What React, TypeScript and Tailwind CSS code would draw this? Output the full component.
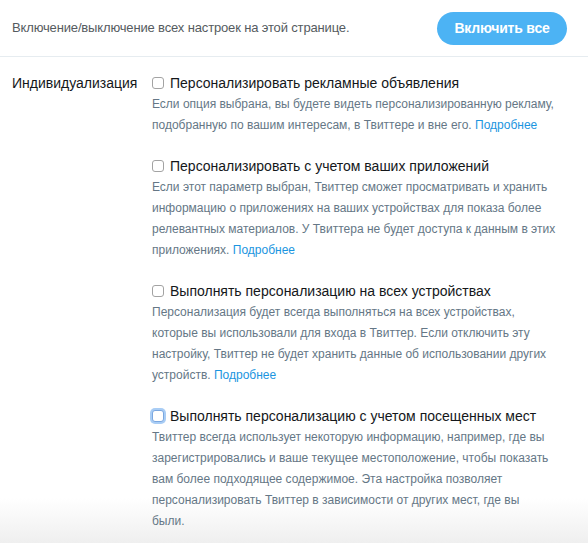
import React from "react";

const sections = [
  {
    title: "Персонализировать рекламные объявления",
    text: "Если опция выбрана, вы будете видеть персонализированную рекламу, подобранную по вашим интересам, в Твиттере и вне его.",
    focused: false,
  },
  {
    title: "Персонализировать с учетом ваших приложений",
    text: "Если этот параметр выбран, Твиттер сможет просматривать и хранить информацию о приложениях на ваших устройствах для показа более релевантных материалов. У Твиттера не будет доступа к данным в этих приложениях.",
    focused: false,
  },
  {
    title: "Выполнять персонализацию на всех устройствах",
    text: "Персонализация будет всегда выполняться на всех устройствах, которые вы использовали для входа в Твиттер. Если отключить эту настройку, Твиттер не будет хранить данные об использовании других устройств.",
    focused: false,
  },
  {
    title: "Выполнять персонализацию с учетом посещенных мест",
    text: "Твиттер всегда использует некоторую информацию, например, где вы зарегистрировались и ваше текущее местоположение, чтобы показать вам более подходящее содержимое. Эта настройка позволяет персонализировать Твиттер в зависимости от других мест, где вы",
    tail: "были.",
    focused: true,
  },
];

export default function App() {
  return (
    <main className="h-[543px] w-[588px] overflow-hidden bg-[linear-gradient(to_bottom,#ffffff_498px,#efefef)] font-['Liberation_Sans',Arial,sans-serif]">
      <div className="flex h-[57px] items-center justify-between border-b border-[#e6ecf0] pl-3 pr-[21px]">
        <p className="text-[13px] tracking-[-0.15px] text-[#555b60]">
          Включение/выключение всех настроек на этой странице.
        </p>
        <button className="h-[33px] w-[130px] rounded-full bg-[#4cb3f4] text-[14px] font-bold tracking-[-0.2px] text-white">
          Включить все
        </button>
      </div>

      <div className="flex pl-3 pt-[16px]">
        <div className="w-[140px] shrink-0 text-[14px] leading-5 text-[#14171a]">
          Индивидуализация
        </div>
        <div className="flex w-[410px] flex-col gap-[20px]">
          {sections.map((s) => (
            <div key={s.title}>
              <label className="flex items-center gap-[6px] text-[14px] leading-5 text-[#14171a]">
                <span
                  className={`h-[12px] w-[12px] shrink-0 rounded-[3px] border bg-white ${
                    s.focused
                      ? "border-[#7aa7e0] shadow-[0_0_0_2px_#a9cdf5]"
                      : "border-[#a3a3a3]"
                  }`}
                />
                {s.title}
              </label>
              <p className="mt-[1px] text-[12px] leading-[21px] text-[#657786]">
                {s.text}
                {s.tail ? (
                  <>
                    <br />
                    {s.tail}
                  </>
                ) : (
                  <>
                    {" "}
                    <a className="text-[#1b95e0]">Подробнее</a>
                  </>
                )}
              </p>
            </div>
          ))}
        </div>
      </div>
    </main>
  );
}
